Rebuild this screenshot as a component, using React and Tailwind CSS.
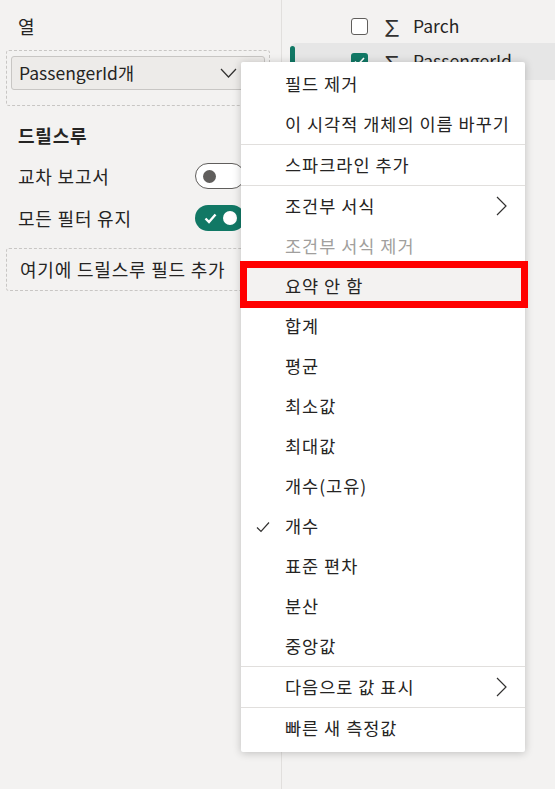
import React from "react";

const font = { fontFamily: '"Noto Sans CJK KR", "Noto Sans", sans-serif' };

function Chevron() {
  return (
    <svg width="11" height="20" viewBox="0 0 11 20" className="text-[#323130] shrink-0">
      <path d="M1 1 L10 10 L1 19" fill="none" stroke="currentColor" strokeWidth="1.2" />
    </svg>
  );
}

function Item({ children, disabled, chevron, check, active }) {
  return (
    <div
      className={
        "h-[40px] flex items-center pl-[44px] pr-[18px] relative text-[17.5px] tracking-[1px] whitespace-nowrap " +
        (disabled ? "text-[#a19f9d] " : "text-[#252423] ") +
        (active ? "bg-[#f3f2f1] " : "")
      }
    >
      {check && (
        <svg width="14" height="12" viewBox="0 0 14 12" className="absolute left-[15px] top-[15px]">
          <path d="M1 6.5 L5 10.5 L13 1.5" fill="none" stroke="#323130" strokeWidth="1.2" />
        </svg>
      )}
      <span className="flex-1 whitespace-nowrap">{children}</span>
      {chevron && <Chevron />}
    </div>
  );
}

function Sep() {
  return <div className="h-px bg-[#e1dfdd]" />;
}

export default function App() {
  return (
    <div style={font} className="relative w-[555px] h-[789px] overflow-hidden flex bg-[#f3f2f1] text-[#252423]">
      {/* Left panel */}
      <div className="w-[282px] shrink-0 border-r border-[#e1dfdd] flex flex-col pt-[14px] pl-[6px] pr-[11px] tracking-[0.8px]">
        <div className="pl-[12px] text-[18px] leading-[24px]">열</div>
        <div className="mt-[12px] border border-dashed border-[#c8c6c4] rounded-[3px] px-[4px] pt-[5px] pb-[15px]">
          <div className="h-[34px] border border-[#c8c6c4] bg-[#edebe9] rounded-[3px] flex items-center pl-[7px] pr-[27px] text-[17.5px] tracking-normal">
            <span className="flex-1">PassengerId개</span>
            <svg width="17" height="10" viewBox="0 0 17 10">
              <path d="M1 1 L8.5 9 L16 1" fill="none" stroke="#323130" strokeWidth="1.2" />
            </svg>
          </div>
        </div>
        <div className="pl-[12px] mt-[17px] text-[18px] font-bold leading-[24px]">드릴스루</div>
        <div className="pl-[12px] mt-[15px] flex items-center h-[28px] text-[18px]">
          <span className="flex-1">교차 보고서</span>
          <div className="shrink-0 w-[50px] h-[26px] rounded-full border border-[#605e5c] bg-white flex items-center pl-[7px] mr-[25px]">
            <div className="w-[13px] h-[13px] rounded-full bg-[#605e5c]" />
          </div>
        </div>
        <div className="pl-[12px] mt-[14px] flex items-center h-[28px] text-[18px]">
          <span className="flex-1">모든 필터 유지</span>
          <div className="shrink-0 w-[50px] h-[26px] rounded-full bg-[#117865] flex items-center pl-[9px] gap-[6px] mr-[25px]">
            <svg width="13" height="11" viewBox="0 0 13 11">
              <path d="M1.5 5.5 L5 9 L11.5 1.5" fill="none" stroke="white" strokeWidth="2.4" />
            </svg>
            <div className="w-[14px] h-[14px] rounded-full bg-white" />
          </div>
        </div>
        <div className="mt-[16px] h-[43px] border border-dashed border-[#c8c6c4] rounded-[3px] flex items-center pl-[13px] text-[18px] whitespace-nowrap">
          여기에 드릴스루 필드 추가
        </div>
      </div>

      {/* Right panel */}
      <div className="flex-1 flex flex-col pt-[12px] pl-[8px]">
        <div className="h-[28px] flex items-center pl-[61px]">
          <div className="w-[17px] h-[17px] rounded-[3px] border border-[#605e5c] bg-white" />
          <span className="ml-[13px] text-[22px] leading-none text-[#323130]">∑</span>
          <span className="ml-[10px] text-[17.5px]">Parch</span>
        </div>
        <div className="mt-[3px] h-[37px] flex items-center bg-[#e6e6e6] rounded-l-[6px] relative">
          <div className="absolute left-0 top-[3px] bottom-[3px] w-[5px] rounded-full bg-[#117865]" />
          <div className="ml-[61px] w-[17px] h-[17px] rounded-[3px] bg-[#117865] flex items-center justify-center">
            <svg width="11" height="9" viewBox="0 0 11 9">
              <path d="M1 4.5 L4 7.5 L10 1" fill="none" stroke="white" strokeWidth="1.6" />
            </svg>
          </div>
          <span className="ml-[13px] text-[22px] leading-none text-[#323130]">∑</span>
          <span className="ml-[10px] text-[17.5px]">PassengerId</span>
        </div>
      </div>

      {/* Context menu */}
      <div className="absolute left-[241px] top-[62px] w-[284px] bg-white pt-[2px] pb-[4px] shadow-[0_1px_8px_rgba(0,0,0,0.22)] rounded-[2px]">
        <Item>필드 제거</Item>
        <Item>이 시각적 개체의 이름 바꾸기</Item>
        <Sep />
        <Item>스파크라인 추가</Item>
        <Sep />
        <Item chevron>조건부 서식</Item>
        <Item disabled>조건부 서식 제거</Item>
        <Item active>요약 안 함</Item>
        <Item>합계</Item>
        <Item>평균</Item>
        <Item>최소값</Item>
        <Item>최대값</Item>
        <Item>개수(고유)</Item>
        <Item check>개수</Item>
        <Item>표준 편차</Item>
        <Item>분산</Item>
        <Item>중앙값</Item>
        <Sep />
        <Item chevron>다음으로 값 표시</Item>
        <Sep />
        <Item>빠른 새 측정값</Item>
      </div>

      {/* Red annotation box */}
      <div className="absolute left-[240px] top-[261px] w-[288px] h-[47px] border-[7px] border-[#ff0000] pointer-events-none" />
    </div>
  );
}
